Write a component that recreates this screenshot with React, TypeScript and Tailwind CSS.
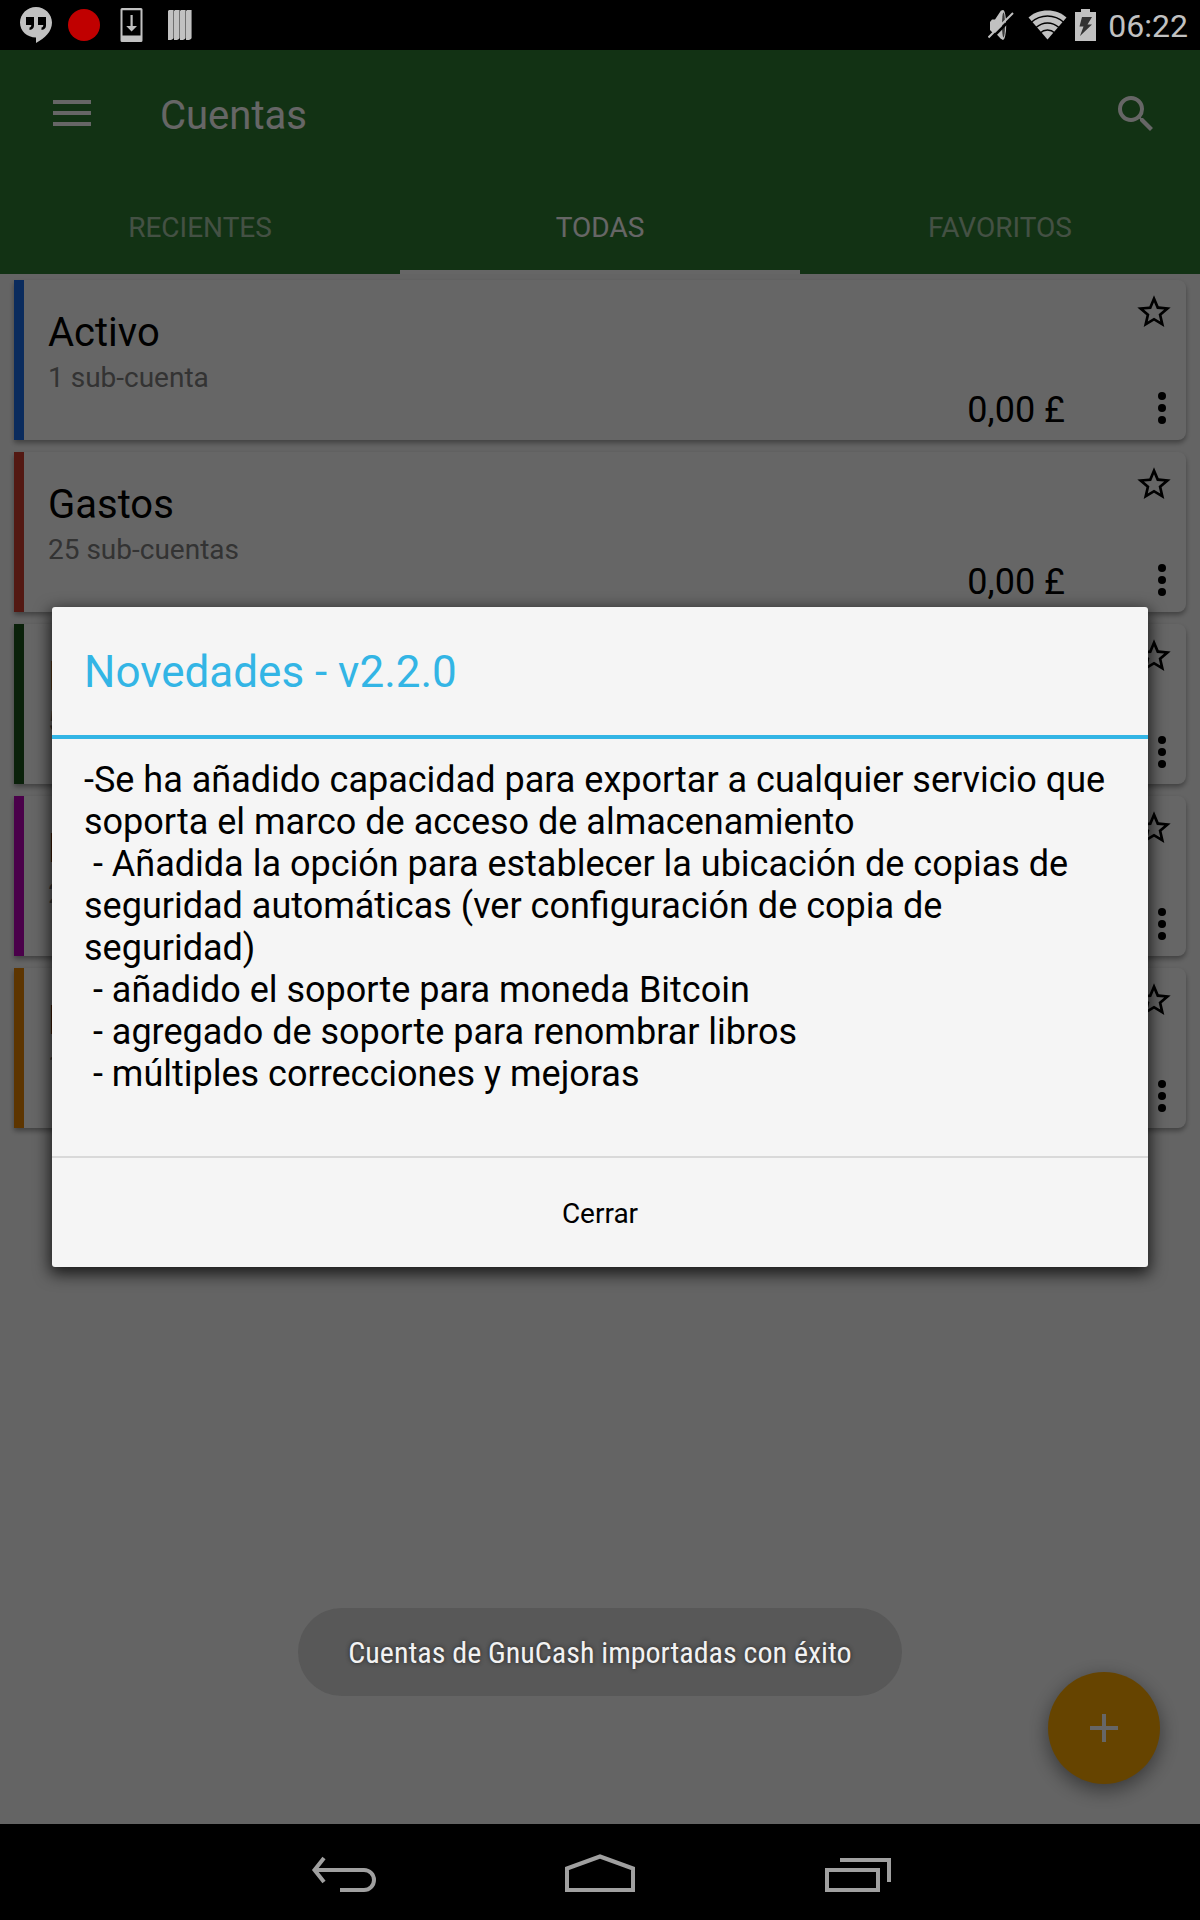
type Account = {
  name: string;
  detail: string;
  balance: string;
  bar: string;
};

const accounts: Account[] = [
  { name: 'Activo', detail: '1 sub-cuenta', balance: '0,00 £', bar: 'bg-[#196be8]' },
  { name: 'Gastos', detail: '25 sub-cuentas', balance: '0,00 £', bar: 'bg-[#d03e2d]' },
  { name: 'Ingresos', detail: '5 sub-cuentas', balance: '0,00 £', bar: 'bg-[#195319]' },
  { name: 'Pasivo', detail: '2 sub-cuentas', balance: '0,00 £', bar: 'bg-[#b900b9]' },
  { name: 'Patrimonio', detail: '1 sub-cuenta', balance: '0,00 £', bar: 'bg-[#e88500]' },
];

const tabs = [
  { label: 'RECIENTES', active: false },
  { label: 'TODAS', active: true },
  { label: 'FAVORITOS', active: false },
];

const news = `-Se ha añadido capacidad para exportar a cualquier servicio que soporta el marco de acceso de almacenamiento
 - Añadida la opción para establecer la ubicación de copias de seguridad automáticas (ver configuración de copia de seguridad)
 - añadido el soporte para moneda Bitcoin
 - agregado de soporte para renombrar libros
 - múltiples correcciones y mejoras`;

function StatusBar() {
  return (
    <div className="flex h-[50px] items-center justify-between bg-black pr-3 pl-5 text-[#c1c1c1]">
      <div className="flex items-center gap-4">
        <svg width="32" height="36" viewBox="0 0 32 36" fill="currentColor" aria-label="Hangouts">
          <path d="M16 0C7.2 0 0 7 0 15.600c0 8.600 7 15 16 15V36c9-4.500 16-11.600 16-20.400C32 7 24.800 0 16 0z" />
          <path d="M6 10h8v8.500c0 2.500-1.500 4-4.500 4.500v-2.500c1.200-.4 1.800-1 1.800-2.500H6zM18 10h8v8.500c0 2.500-1.500 4-4.500 4.500v-2.500c1.200-.4 1.800-1 1.800-2.500H18z" fill="#000" />
        </svg>
        <span className="size-8 rounded-full bg-[#c00000]" />
        <svg className="ml-1" width="24" height="34" viewBox="0 0 24 34" fill="currentColor" aria-label="Descarga">
          <path fillRule="evenodd" d="M2 0h19a1.500 1.500 0 0 1 1.500 1.500v31A1.500 1.500 0 0 1 21 34H2a1.500 1.500 0 0 1-1.500-1.500v-31A1.500 1.500 0 0 1 2 0zm.5 2.300V27.500h18V2.300z" />
          <path d="M10.500 7h2.200v11h4.300l-5.400 5.500L6.200 18h4.300z" />
        </svg>
        <svg className="ml-2" width="25" height="32" viewBox="0 0 25 32" fill="currentColor" aria-label="Códigos">
          {[0, 6, 12, 18].map((x) => (
            <g key={x}>
              <path d={`M${x} 2l1-1h4v29l-2 1H${x}z`} />
              <path d={`M${x + 5} 1h1v28l-1 1z`} fill="#707070" />
            </g>
          ))}
        </svg>
      </div>
      <div className="flex items-center">
        <svg width="27" height="32" viewBox="0 0 27 32" fill="currentColor" aria-label="Silencio">
          <path d="M2 13 4 10.500h3L13 1.500l2 0V30.500l-2-.5-6-6.500H4.500L2 21z" />
          <ellipse cx="15" cy="16" rx="3.200" ry="15" />
          <ellipse cx="15.500" cy="16" rx="1.500" ry="12.500" fill="#3a3a3a" />
          <path d="M3 30 27 6" stroke="#000" strokeWidth="2.500" />
          <path d="M0.500 28.500 25 4" stroke="currentColor" strokeWidth="2" />
        </svg>
        <svg className="ml-[13px]" width="39" height="32" viewBox="0 0 39 32" aria-label="Wi-Fi">
          <path d="M19.500 1.500C12 1.500 5.500 4 .5 8.500l19 22 19-22C33.500 4 27 1.500 19.500 1.500z" fill="currentColor" />
          <g fill="none" stroke="#000" strokeWidth="1.400">
            <path d="M3 13.500C8 9 13.500 7 19.500 7s11.500 2 16.500 6.500" />
            <path d="M8 18.500c3.500-3 7-4.500 11.500-4.500s8 1.500 11.500 4.500" />
            <path d="M12 24c2.500-2.200 4.700-3 7.500-3s5 .8 7.500 3" />
          </g>
        </svg>
        <svg className="ml-2" width="21" height="32" viewBox="0 0 21 32" fill="currentColor" aria-label="Batería">
          <path d="M6 0h9v3h6v29H0V3h6z" />
          <path d="M7 8h10l-4.500 7.500H17L5 27l3.500-9.500H4.500z" fill="#333" />
        </svg>
        <span className="ml-3 pt-0.5 text-[32px] leading-[38px]">06:22</span>
      </div>
    </div>
  );
}

function AppBar() {
  return (
    <header className="bg-[#2f7d32] text-white">
      <div className="flex h-32 items-center justify-between pr-10 pl-12">
        <div className="flex items-center gap-16">
          <button type="button" aria-label="Menú">
            <svg width="48" height="48" viewBox="0 0 48 48" fill="currentColor">
              <path d="M5 10h38v4H5zM5 21h38v4H5zM5 32h38v4H5z" />
            </svg>
          </button>
          <h1 className="pt-1 text-[40px] leading-[48px]">Cuentas</h1>
        </div>
        <button type="button" aria-label="Buscar">
          <svg width="48" height="48" viewBox="0 0 24 24" fill="currentColor">
            <path d="M15.500 14h-.79l-.28-.27A6.471 6.471 0 0 0 16 9.500 6.500 6.500 0 1 0 9.500 16c1.610 0 3.090-.59 4.230-1.570l.27.28v.79l5 4.990L20.490 19l-4.990-5zm-6 0C7.010 14 5 11.990 5 9.500S7.010 5 9.500 5 14 7.010 14 9.500 11.990 14 9.500 14z" />
          </svg>
        </button>
      </div>
      <nav className="grid h-24 grid-cols-3">
        {tabs.map((tab) => (
          <button
            key={tab.label}
            type="button"
            className={
              tab.active
                ? 'border-y-4 border-transparent border-b-white pt-1 text-[28px] text-white'
                : 'border-y-4 border-transparent pt-1 text-[28px] text-white/60'
            }
          >
            {tab.label}
          </button>
        ))}
      </nav>
    </header>
  );
}

function AccountCard({ account }: { account: Account }) {
  return (
    <li className="flex h-40 overflow-hidden rounded-r-lg bg-white shadow-[0_3px_5px_rgba(0,0,0,0.35)]">
      <span className={`w-2.5 ${account.bar}`} />
      <div className="flex-1 pt-[29px] pl-6">
        <h2 className="text-[40px] leading-[48px] text-black">{account.name}</h2>
        <p className="text-[28px] leading-[42px] text-[#808080]">{account.detail}</p>
      </div>
      <p className="self-end pb-2 text-[36px] leading-[44px] text-black">{account.balance}</p>
      <div className="flex w-[121px] flex-col items-end justify-between py-2">
        <button type="button" aria-label={`Favorito ${account.name}`} className="mr-3 pt-1">
          <svg width="40" height="40" viewBox="0 0 24 24">
            <path d="M22 9.240l-7.190-.62L12 2 9.190 8.630 2 9.240l5.460 4.730L5.820 21 12 17.270 18.180 21l-1.630-7.030L22 9.240zM12 15.400l-3.760 2.270 1-4.280-3.320-2.880 4.380-.38L12 6.100l1.710 4.040 4.380.38-3.320 2.880 1 4.280L12 15.400z" />
          </svg>
        </button>
        <button type="button" aria-label={`Opciones ${account.name}`}>
          <svg width="48" height="48" viewBox="0 0 48 48">
            <circle cx="24" cy="12" r="4" />
            <circle cx="24" cy="24" r="4" />
            <circle cx="24" cy="36" r="4" />
          </svg>
        </button>
      </div>
    </li>
  );
}

function NewsDialog() {
  return (
    <section
      role="dialog"
      aria-labelledby="news-title"
      className="mx-[52px] w-full rounded-[3px] bg-[#f5f5f5] text-black shadow-[0_5px_16px_2px_rgba(0,0,0,0.75)]"
    >
      <h2
        id="news-title"
        className="border-b-4 border-[#33b5e5] px-8 pt-[37px] pb-[35px] text-[44px] leading-[56px] text-[#33b5e5]"
      >
        Novedades - v2.2.0
      </h2>
      <p className="px-8 pt-5 pb-[61px] text-[36px] leading-[42px] whitespace-pre-wrap">{news}</p>
      <button type="button" className="block h-[111px] w-full border-t-2 border-[#d9d9d9] pt-0.5 text-[28px]">
        Cerrar
      </button>
    </section>
  );
}

function NavigationBar() {
  return (
    <nav className="flex h-24 items-center justify-center gap-[188px] bg-black text-[#a0a0a0]">
      <button type="button" aria-label="Atrás">
        <svg width="72" height="48" viewBox="0 0 72 48" fill="none" stroke="currentColor" strokeWidth="4">
          <path d="M20 10 10.500 22 20 34M10 22h50a10 10 0 0 1 0 20H36" />
        </svg>
      </button>
      <button type="button" aria-label="Inicio">
        <svg width="72" height="48" viewBox="0 0 72 48" fill="none" stroke="currentColor" strokeWidth="4">
          <path d="M3 42V20.500L36 8.500l33 12V42z" />
        </svg>
      </button>
      <button type="button" aria-label="Recientes">
        <svg width="72" height="48" viewBox="0 0 72 48" fill="none" stroke="currentColor" strokeWidth="4">
          <path d="M3 22h51v20H3zM16 12h49v22" />
        </svg>
      </button>
    </nav>
  );
}

export default function App() {
  return (
    <div className="flex min-h-screen flex-col bg-black font-[Roboto,sans-serif]">
      <StatusBar />
      <div className="relative flex flex-1 flex-col bg-[#fafafa]">
        <AppBar />
        <main className="flex-1 px-3.5 pt-1.5">
          <ul className="flex flex-col gap-3">
            {accounts.map((account) => (
              <AccountCard key={account.name} account={account} />
            ))}
          </ul>
        </main>
        <button
          type="button"
          aria-label="Añadir cuenta"
          className="absolute right-10 bottom-10 flex size-28 items-center justify-center rounded-full bg-[#ffaa00] text-white shadow-[0_6px_20px_rgba(0,0,0,0.45)]"
        >
          <svg width="28" height="28" viewBox="0 0 28 28" fill="currentColor">
            <path d="M12 0h4v12h12v4H16v12h-4V16H0v-4h12z" />
          </svg>
        </button>
        <div className="absolute inset-0 flex items-center justify-center bg-black/60">
          <NewsDialog />
        </div>
        <div className="absolute inset-x-0 bottom-32 flex justify-center">
          <p
            role="status"
            className="rounded-[44px] bg-[#585858] px-[50px] pt-[25px] pb-[23px] font-['Roboto_Condensed','Roboto',sans-serif] text-[30px] leading-10 text-[#f2f2f2] [text-shadow:0_0_4px_#222]"
          >
            Cuentas de GnuCash importadas con éxito
          </p>
        </div>
      </div>
      <NavigationBar />
    </div>
  );
}
